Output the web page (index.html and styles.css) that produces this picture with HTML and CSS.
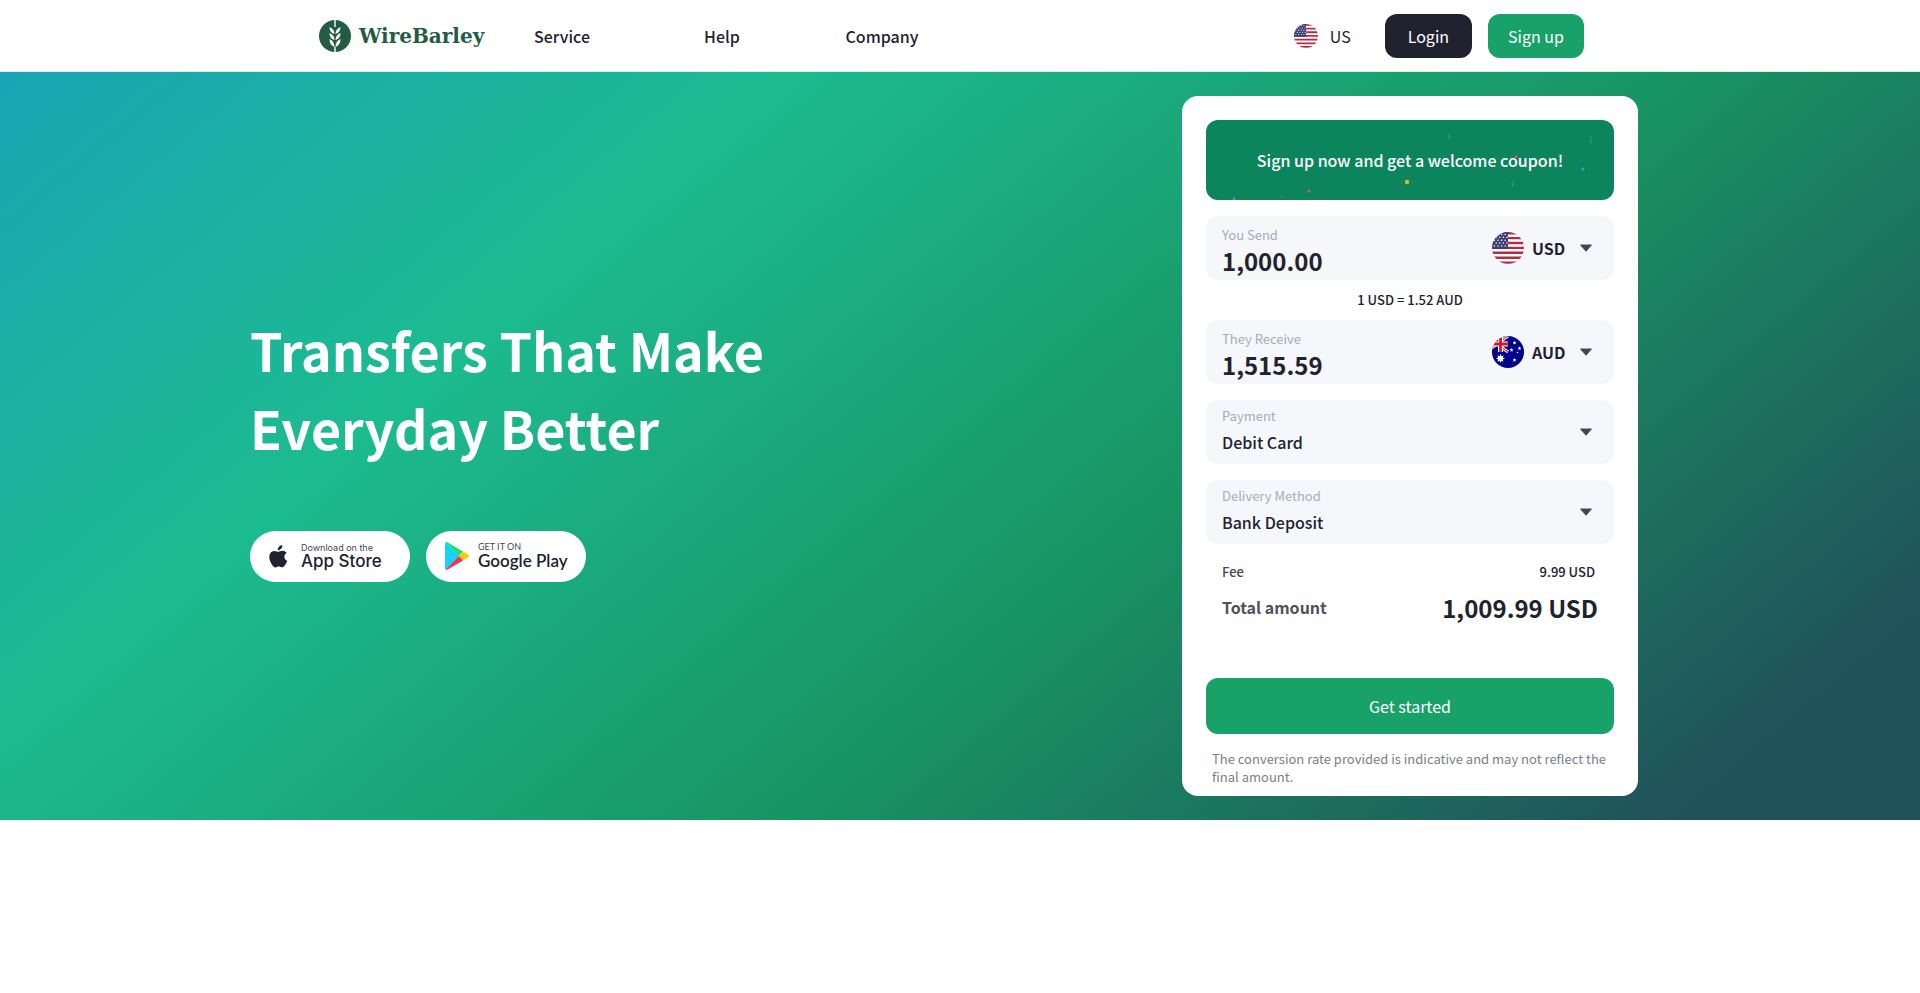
FILE: index.html
```html
<!DOCTYPE html>
<html lang="en">
<head>
    <meta charset="UTF-8">
    <meta name="viewport" content="width=device-width, initial-scale=1.0">
    <title>WireBarley</title>
    <link rel="stylesheet" href="styles.css">
</head>
<body>

    <!-- Shared icons -->
    <svg class="sprite" aria-hidden="true">
        <clipPath id="round"><circle cx="16" cy="16" r="16"/></clipPath>
        <symbol id="flag-us" viewBox="0 0 32 32">
            <g clip-path="url(#round)">
                <rect width="32" height="32" fill="#fff"/>
                <path stroke="#b22c42" stroke-width="2.4" d="M0 1.2h32M0 6.1h32M0 11h32M0 15.9h32M0 20.8h32M0 25.7h32M0 30.6h32"/>
                <rect width="16" height="17.1" fill="#3f3f74"/>
                <path stroke="#fff" stroke-width="1.5" stroke-linecap="round" stroke-dasharray="0 3.6" d="M6 2.4h10M4.2 5.3h12M2.4 8.2h14M4.2 11.1h12M2.4 14h14"/>
            </g>
        </symbol>
        <symbol id="flag-au" viewBox="0 0 32 32">
            <g clip-path="url(#round)">
                <rect width="32" height="32" fill="#00008b"/>
                <path stroke="#fff" stroke-width="3" d="M-6 0L16 16M16 0L-6 16"/>
                <path stroke="#e0303c" stroke-width="1.2" d="M-6 0L16 16M16 0L-6 16"/>
                <path stroke="#fff" stroke-width="5" d="M8.500 0v16M0 8h16"/>
                <path stroke="#d3152b" stroke-width="2.800" d="M8.500 0v16M0 8h16"/>
                <path fill="#fff" d="M8.500 18l.9 2.300 2.300-.9-1 2.200 2.200 1-2.300.8.9 2.300-2.200-1-.8 2.300-.9-2.300-2.300 1 1-2.300-2.300-.8 2.200-1-1-2.300 2.300 1z"/>
                <path fill="#fff" d="M22.500 4.800l.6 1.200 1.300.2-1 .9.300 1.400-1.200-.7-1.200.7.300-1.400-1-.9 1.300-.2zM27.500 10.300l.6 1.200 1.300.2-1 .9.300 1.400-1.200-.7-1.200.7.300-1.400-1-.9 1.300-.2zM19.500 12l.6 1.200 1.300.2-1 .9.300 1.400-1.200-.7-1.200.7.300-1.400-1-.9 1.300-.2zM22.500 22l.6 1.200 1.300.2-1 .9.300 1.400-1.200-.7-1.200.7.300-1.400-1-.9 1.300-.2z"/>
                <circle cx="25.500" cy="16.500" r=".8" fill="#fff"/>
            </g>
        </symbol>
        <symbol id="caret" viewBox="0 0 12 8">
            <path fill="#45474f" d="M.9.5h10.200c.5 0 .7.500.4.9L6.500 7.200a.7.700 0 0 1-1 0L.5 1.400C.2 1 .4.5.9.5z"/>
        </symbol>
    </svg>

    <header class="header">
        <div class="header-inner">
            <a href="#" class="logo">
                <svg class="logo-mark" viewBox="0 0 32 32" aria-hidden="true">
                    <circle cx="16" cy="16" r="16" fill="#225c43"/>
                    <path stroke="#fff" stroke-width="1.400" d="M16 0v7M16 27v5"/>
                    <path fill="#fff" d="M15.500 14c-3.400-1.200-5-3.200-5-7 3.200 1.600 5 3.600 5 7zM16.500 14c3.400-1.200 5-3.200 5-7-3.200 1.600-5 3.600-5 7zM15.500 20c-3.400-1.200-5-3.200-5-7 3.200 1.600 5 3.600 5 7zM16.500 20c3.400-1.200 5-3.200 5-7-3.200 1.600-5 3.600-5 7zM15.500 27c-3.400-1.200-5-3.800-5-8 3.200 1.600 5 4 5 8zM16.500 27c3.400-1.200 5-3.800 5-8-3.200 1.600-5 4-5 8z"/>
                </svg>
                <span>WireBarley</span>
            </a>
            <nav class="nav">
                <a href="#">Service</a>
                <a href="#">Help</a>
                <a href="#">Company</a>
            </nav>
            <div class="actions">
                <button type="button" class="region">
                    <svg class="flag-small" aria-hidden="true"><use href="#flag-us"/></svg>
                    US
                </button>
                <button type="button" class="btn btn-dark">Login</button>
                <button type="button" class="btn btn-green">Sign up</button>
            </div>
        </div>
    </header>

    <main class="hero">
        <div class="hero-inner">
            <section class="intro">
                <h1>Transfers That Make<br>Everyday Better</h1>
                <div class="stores">
                    <a href="#" class="store">
                        <svg class="apple" viewBox="0 0 20 24" aria-hidden="true">
                            <path fill="#21222f" d="M14 0c.2 1.500-.4 2.900-1.300 3.900-.9 1-2.100 1.700-3.500 1.600-.2-1.400.5-2.800 1.300-3.700C11.400.8 12.800.1 14 0zM18.600 8.200c-1.500.9-2.400 2.200-2.400 4 0 2.100 1.200 3.600 3 4.400-.5 1.500-1.300 3-2.300 4.400-.9 1.300-1.800 2.400-3.200 2.400-1.400 0-1.800-.8-3.500-.8-1.600 0-2.200.8-3.500.9-1.400 0-2.400-1.300-3.300-2.600C.6 17.200-.9 11.900 1.400 8.600c1-1.600 2.700-2.500 4.400-2.500 1.600 0 2.700.9 4 .9 1.200 0 2.200-1 4.300-1 1.600 0 3.300.8 4.500 2.200z"/>
                        </svg>
                        <span class="store-text apple-text">
                            <small>Download on the</small>
                            <strong>App Store</strong>
                        </span>
                    </a>
                    <a href="#" class="store">
                        <svg class="play" viewBox="0 0 24 28" aria-hidden="true">
                            <path fill="#18d3f5" d="M.6.5A2 2 0 0 0 0 2v24c0 .6.2 1.100.6 1.500L14 14z"/>
                            <path fill="#1fdf7c" d="M.6.500C1.100 0 1.900 0 2.700.4L18 9.500 13.700 14z"/>
                            <path fill="#ffc90d" d="M18 9.500l5 3.100c1.300.8 1.300 2 0 2.800l-5 3.100L13.700 14z"/>
                            <path fill="#ee3650" d="M13.700 14l4.300 4.500L2.700 27.600c-.8.4-1.600.4-2.100-.1z"/>
                        </svg>
                        <span class="store-text play-text">
                            <small>GET IT ON</small>
                            <strong>Google Play</strong>
                        </span>
                    </a>
                </div>
            </section>

            <form class="card">
                <div class="banner">
                    <svg class="confetti" viewBox="0 0 408 80" aria-hidden="true">
                        <circle cx="201" cy="62" r="2.200" fill="#e3b71c"/>
                        <circle cx="103" cy="71" r="1.600" fill="#d9574a"/>
                        <circle cx="310" cy="37" r="1.600" fill="#d9574a"/>
                        <circle cx="377" cy="49" r="1.600" fill="#1fa5dc"/>
                        <circle cx="28" cy="79" r="1.400" fill="#1fa5dc"/>
                        <path fill="none" stroke="#4aa385" stroke-width=".8" d="M242 14l1 2v3M384 16l1 3v4M307 61l-1 2 1 4M76 76v2"/>
                    </svg>
                    <span>Sign up now and get a welcome coupon!</span>
                </div>

                <div class="field">
                    <div class="field-main">
                        <label for="send">You Send</label>
                        <input type="text" id="send" class="amount" value="1,000.00">
                    </div>
                    <svg class="flag" aria-hidden="true"><use href="#flag-us"/></svg>
                    <select class="currency" aria-label="Send currency">
                        <option>USD</option>
                    </select>
                    <svg class="caret" aria-hidden="true"><use href="#caret"/></svg>
                </div>

                <p class="rate">1 USD = 1.52 AUD</p>

                <div class="field">
                    <div class="field-main">
                        <label for="receive">They Receive</label>
                        <input type="text" id="receive" class="amount" value="1,515.59">
                    </div>
                    <svg class="flag" aria-hidden="true"><use href="#flag-au"/></svg>
                    <select class="currency" aria-label="Receive currency">
                        <option>AUD</option>
                    </select>
                    <svg class="caret" aria-hidden="true"><use href="#caret"/></svg>
                </div>

                <div class="field option">
                    <div class="field-main">
                        <label for="payment">Payment</label>
                        <select id="payment">
                            <option>Debit Card</option>
                        </select>
                    </div>
                    <svg class="caret" aria-hidden="true"><use href="#caret"/></svg>
                </div>

                <div class="field option">
                    <div class="field-main">
                        <label for="delivery">Delivery Method</label>
                        <select id="delivery">
                            <option>Bank Deposit</option>
                        </select>
                    </div>
                    <svg class="caret" aria-hidden="true"><use href="#caret"/></svg>
                </div>

                <div class="row fee">
                    <span>Fee</span>
                    <span class="value">9.99 USD</span>
                </div>
                <div class="row total">
                    <span>Total amount</span>
                    <strong class="value">1,009.99 USD</strong>
                </div>

                <button type="button" class="start">Get started</button>
                <p class="note">The conversion rate provided is indicative and may not reflect the final amount.</p>
            </form>
        </div>
    </main>

</body>
</html>
```

FILE: styles.css
```css
* {
    box-sizing: border-box;
}
body {
    margin: 0;
    background: #fff;
    color: #21222f;
    font-family: "Noto Sans CJK KR", "Noto Sans", sans-serif;
}
a {
    color: inherit;
    text-decoration: none;
}
button, input, select {
    font: inherit;
    color: inherit;
    border: none;
    padding: 0;
    background: none;
}
button, select {
    cursor: pointer;
}
select {
    appearance: none;
}
p {
    margin: 0;
}
.sprite {
    position: absolute;
    width: 0;
    height: 0;
}

/* Header */
.header {
    height: 72px;
    border-bottom: 1px solid #e3ebe8;
}
.header-inner {
    display: flex;
    align-items: center;
    max-width: 1282px;
    height: 100%;
    margin: 0 auto;
    padding-right: 17px;
}
.logo {
    display: flex;
    align-items: center;
    gap: 8px;
    width: 163px;
    color: #225c43;
    font-family: "DejaVu Serif", serif;
    font-size: 20px;
    font-weight: bold;
}
.logo-mark {
    width: 32px;
    height: 32px;
    flex: none;
}
.nav {
    display: flex;
    font-size: 16px;
    font-weight: 500;
}
.nav a {
    width: 160px;
    text-align: center;
}
.actions {
    display: flex;
    align-items: center;
    gap: 16px;
    margin-left: auto;
    font-size: 16px;
}
.region {
    display: flex;
    align-items: center;
    gap: 12px;
    margin-right: 18px;
}
.flag-small {
    width: 24px;
    height: 24px;
}
.btn {
    height: 44px;
    padding: 0 20px;
    border-radius: 12px;
    color: #fff;
}
.btn-dark {
    padding: 0 23px;
    background: #21222f;
}
.btn-green {
    background: #18a267;
}

/* Hero */
.hero {
    padding: 24px 0;
    background: linear-gradient(140deg, #1ba5b5 0%, #1cbb90 28%, #189463 60%, #20525a 91%);
}
.hero-inner {
    display: flex;
    justify-content: space-between;
    align-items: center;
    max-width: 1420px;
    margin: 0 auto;
    padding-right: 32px;
}
h1 {
    margin: 0 0 64px;
    color: #fff;
    font-size: 52px;
    line-height: 78px;
}
.stores {
    display: flex;
    gap: 16px;
}
.store {
    display: flex;
    align-items: center;
    width: 160px;
    height: 51px;
    padding-left: 19px;
    border-radius: 26px;
    background: #fff;
}
.apple {
    width: 19px;
    height: 23px;
    margin-right: 13px;
}
.play {
    width: 24px;
    height: 28px;
    margin-right: 9px;
}
.store-text {
    display: flex;
    flex-direction: column;
    white-space: nowrap;
}
.store-text small {
    color: #45474f;
    font-size: 9px;
    line-height: 11px;
}
.store-text strong {
    font-size: 17px;
    font-weight: 500;
    line-height: 17px;
}
.apple-text {
    font-family: Inter, sans-serif;
}
.play-text {
    padding-bottom: 2px;
    font-family: Lato, sans-serif;
}
.play-text strong {
    font-weight: 600;
}

/* Calculator */
.card {
    width: 456px;
    padding: 24px 24px 0;
    border-radius: 16px;
    background: #fff;
}
.banner {
    position: relative;
    display: flex;
    align-items: center;
    justify-content: center;
    height: 80px;
    margin-bottom: 16px;
    border-radius: 12px;
    background: #0c845c;
    color: #fff;
    font-size: 16px;
    font-weight: 500;
}
.confetti {
    position: absolute;
    inset: 0;
}
.field {
    display: flex;
    align-items: center;
    height: 64px;
    padding: 0 22px 0 16px;
    border-radius: 12px;
    background: #f5f7fb;
}
.field-main {
    display: flex;
    flex-direction: column;
    flex: 1;
    min-width: 0;
    padding-top: 6px;
}
.field label {
    color: #a9acb4;
    font-size: 13px;
    line-height: 20px;
}
.amount {
    width: 100%;
    height: 32px;
    font-size: 24px;
    font-weight: bold;
    line-height: 32px;
}
.flag {
    width: 32px;
    height: 32px;
    margin-right: 8px;
}
.currency {
    margin-right: 14px;
    font-size: 16px;
    font-weight: bold;
}
.caret {
    width: 12px;
    height: 8px;
}
.rate {
    font-size: 13px;
    font-weight: 500;
    line-height: 40px;
    text-align: center;
}
.option {
    margin-top: 16px;
}
.option .field-main {
    padding-top: 0;
}
.option select {
    font-size: 16px;
    font-weight: 500;
    line-height: 32px;
}
.row {
    display: flex;
    align-items: center;
    justify-content: space-between;
    padding: 0 16px;
}
.row .value {
    color: #21222f;
}
.fee {
    height: 22px;
    margin-top: 16px;
    padding-right: 19px;
    color: #45474f;
    font-size: 13px;
    font-weight: 500;
}
.total {
    height: 50px;
    color: #4f515c;
    font-size: 16px;
    font-weight: bold;
}
.total .value {
    font-size: 24px;
    font-weight: bold;
}
.start {
    width: 100%;
    height: 56px;
    margin-top: 46px;
    border-radius: 12px;
    background: #18a267;
    color: #fff;
    font-size: 16px;
}
.note {
    padding: 16px 6px 10px;
    color: #7c7e88;
    font-size: 13px;
    line-height: 18px;
}
```
